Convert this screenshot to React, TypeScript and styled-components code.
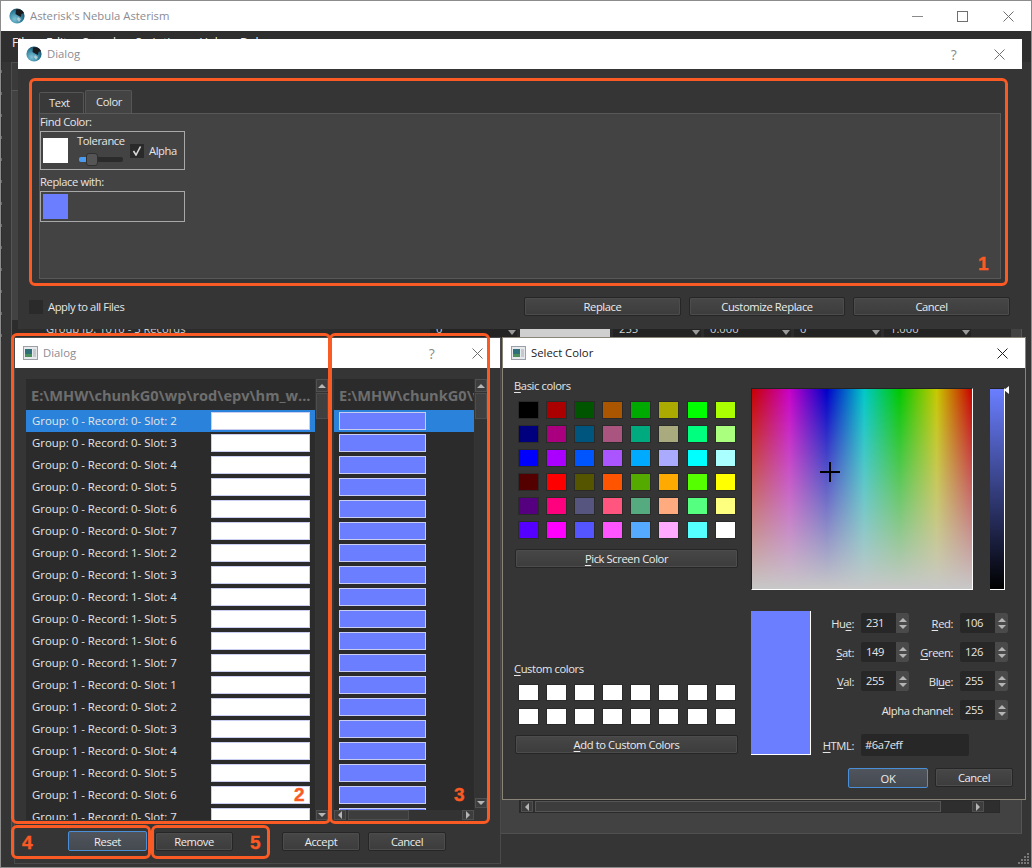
import React from "react";
import styled, { createGlobalStyle } from "styled-components";

const UI_FONT = `"Open Sans", "Noto Sans", sans-serif`;
const ORANGE = "#fa5a24";
const REPLACE = "#6a7eff";

const GlobalStyle = createGlobalStyle`
  html, body {
    margin: 0;
    padding: 0;
    background: #353535;
  }
  * {
    box-sizing: border-box;
  }
  body {
    font-family: ${UI_FONT};
    font-size: 11.2px;
    letter-spacing: -0.4px;
    color: #e6e6e6;
  }
`;

const Desktop = styled.div`
  position: relative;
  width: 1032px;
  height: 868px;
  overflow: hidden;
  background: #353535;
`;

/* windows on the desktop */
const MainWindow = styled.div`
  position: absolute;
  left: 0;
  top: 0;
  width: 1032px;
  height: 868px;
  display: flex;
  flex-direction: column;
  border: 1px solid #8c8c8c;
  background: #353535;
`;

const Window = styled.div<{ $x: number; $y: number; $w: number; $h: number; $border?: string }>`
  position: absolute;
  left: ${(p) => p.$x}px;
  top: ${(p) => p.$y}px;
  width: ${(p) => p.$w}px;
  height: ${(p) => p.$h}px;
  display: flex;
  flex-direction: column;
  background: #353535;
  border: ${(p) => (p.$border ? `1px solid ${p.$border}` : "none")};
`;

const TitleBar = styled.div<{ $pad?: number }>`
  flex: 0 0 30px;
  height: 30px;
  display: flex;
  align-items: center;
  padding-left: ${(p) => p.$pad ?? 8}px;
  background: #fff;
`;

const TitleText = styled.span<{ $active?: boolean }>`
  margin-left: 5px;
  padding-bottom: ${(p) => (p.$active ? 1 : 2)}px;
  font-size: 11.3px;
  letter-spacing: 0;
  color: ${(p) => (p.$active ? "#1a1a1a" : "#8b8b93")};
  flex: 1;
`;

const Caption = styled.div<{ $w: number }>`
  flex: 0 0 ${(p) => p.$w}px;
  width: ${(p) => p.$w}px;
  display: flex;
  align-items: center;
  justify-content: center;
  color: #8a8a8a;
  font-size: 14px;
`;

const GlobeIcon = () => (
  <svg width="16" height="16" viewBox="0 0 16 16">
    <defs>
      <radialGradient id="gl" cx="0.35" cy="0.7" r="0.8">
        <stop offset="0" stopColor="#7fc2d6" />
        <stop offset="0.6" stopColor="#2f7f9c" />
        <stop offset="1" stopColor="#123a4c" />
      </radialGradient>
    </defs>
    <circle cx="8" cy="8" r="7.6" fill="url(#gl)" />
    <path d="M7 1.5 C10 0.5 14 2 15 5 L12.5 6 L12 9 L9 7.5 L6.5 6 Z" fill="#1b1b1f" />
    <path d="M9 9 L12 11 L10 14 L8 11 Z" fill="#c9d6da" opacity="0.8" />
  </svg>
);

const QtWindowIcon = () => (
  <svg width="15" height="14" viewBox="0 0 15 14">
    <rect x="0.5" y="0.5" width="14" height="13" fill="#e7e9ec" stroke="#9aa0a6" />
    <rect x="2" y="3" width="7" height="8" fill="#2f6f78" />
    <rect x="2" y="8" width="7" height="3" fill="#4a8f5a" />
    <rect x="10" y="3" width="3" height="8" fill="#c5c9ce" />
  </svg>
);

const CloseIcon = ({ color = "#6f6f6f" }: { color?: string }) => (
  <svg width="11" height="11" viewBox="0 0 11 11">
    <path d="M0.5 0.5 L10.5 10.5 M10.5 0.5 L0.5 10.5" stroke={color} strokeWidth="1" fill="none" />
  </svg>
);

const MinIcon = () => (
  <svg width="11" height="11" viewBox="0 0 11 11">
    <path d="M0 5.5 H11" stroke="#8a8a8a" strokeWidth="1" />
  </svg>
);

const MaxIcon = () => (
  <svg width="11" height="11" viewBox="0 0 11 11">
    <rect x="0.5" y="0.5" width="10" height="10" fill="none" stroke="#6f6f6f" strokeWidth="1" />
  </svg>
);

const MenuBar = styled.div`
  flex: 0 0 31px;
  display: flex;
  gap: 15px;
  padding: 3px 0 0 11px;
  font-size: 12px;
  letter-spacing: 0;
  color: #eee;
  background: #2f2f2f;
`;

const MainContent = styled.div`
  flex: 1;
  display: flex;
  flex-direction: column;
  padding: 0 9px 33px 10px;
`;

const TabStub = styled.div`
  width: 60px;
  height: 28px;
  flex: none;
  border: 1px solid #4d4d4d;
  border-bottom: none;
  background: #3a3a3a;
`;

const MainPane = styled.div`
  flex: 1;
  display: flex;
  flex-direction: column;
  padding: 0 10px 9px 0;
  background: #424242;
  border: 1px solid #555;
  border-bottom-color: #4f4f4f;
`;

const TreeRow = styled.div`
  margin-top: 229px;
  height: 18px;
  display: flex;
  align-items: stretch;
  color: #cfcfcf;
  letter-spacing: 0;
  background: #2c2c2c;
`;

const TreeLabel = styled.div`
  width: 418px;
  padding-left: 34px;
  line-height: 18px;
  white-space: nowrap;
`;

const TreeCell = styled.div<{ $w: number; $gray?: boolean }>`
  position: relative;
  width: ${(p) => p.$w}px;
  margin-right: 3px;
  padding-left: 6px;
  line-height: 18px;
  background: ${(p) => (p.$gray ? "#cfcfcf" : "#232323")};
`;

const TreeDrop = styled.i`
  position: absolute;
  right: 1px;
  bottom: 3px;
  border-left: 4px solid transparent;
  border-right: 4px solid transparent;
  border-top: 5px solid #9a9a9a;
`;

const PaneFiller = styled.div`
  flex: 1;
`;

const PaneScroll = styled.div`
  height: 13px;
  margin: 0 11px 11px 507px;
  display: flex;
  align-items: center;
  background: #2e2e2e;
  border: 1px solid #2a2a2a;
  padding: 0 15px 0 1px;
`;

const PaneThumb = styled.div`
  flex: 1;
  height: 11px;
  margin: 0 31px 0 2px;
  background: #3d3d3d;
  border: 1px solid #555;
`;

const ScrollButton = styled.div<{ $w?: number; $h?: number }>`
  flex: none;
  width: ${(p) => p.$w ?? 12}px;
  height: ${(p) => p.$h ?? 12}px;
  display: flex;
  align-items: center;
  justify-content: center;
  background: #3d3d3d;
  border: 1px solid #505050;
`;

const Arrow = styled.i<{ $dir: "up" | "down" | "left" | "right"; $color?: string }>`
  width: 0;
  height: 0;
  display: block;
  ${(p) => {
    const c = p.$color ?? "#b5b5b5";
    if (p.$dir === "up") return `border-left:4px solid transparent;border-right:4px solid transparent;border-bottom:4px solid ${c};`;
    if (p.$dir === "down") return `border-left:4px solid transparent;border-right:4px solid transparent;border-top:4px solid ${c};`;
    if (p.$dir === "left") return `border-top:4px solid transparent;border-bottom:4px solid transparent;border-right:4px solid ${c};`;
    return `border-top:4px solid transparent;border-bottom:4px solid transparent;border-left:4px solid ${c};`;
  }}
`;

const Grip = styled.svg`
  position: absolute;
  right: 1px;
  bottom: 2px;
`;

const EdgeDots = styled.div`
  position: absolute;
  left: 0;
  top: 50px;
  width: 1px;
  height: 290px;
  background: repeating-linear-gradient(
    to bottom,
    #2f2f2f 0,
    #2f2f2f 19px,
    #8a5a4a 19px,
    #8a5a4a 22px
  );
`;

/* shared widgets */
const Button = styled.button<{ $w?: number; $focus?: boolean }>`
  flex: none;
  width: ${(p) => (p.$w ? `${p.$w}px` : "100%")};
  height: ${(p) => (p.$focus ? 20 : 19)}px;
  padding: 0;
  font-family: ${UI_FONT};
  font-size: 11.2px;
  letter-spacing: -0.4px;
  color: #ececec;
  border-radius: 2px;
  border: 1px solid ${(p) => (p.$focus ? "#4a90d9" : "#262626")};
  background: ${(p) =>
    p.$focus ? "linear-gradient(#50555d, #454950)" : "linear-gradient(#474747, #3c3c3c)"};
  box-shadow: ${(p) => (p.$focus ? "none" : "inset 0 0 0 1px #4c4c4c")};
  u {
    text-underline-offset: 2px;
  }
`;

/* replace dialog */
const ReplaceBody = styled.div`
  flex: 1;
  display: flex;
  flex-direction: column;
  padding: 21px 21px 0;
`;

const TabRow = styled.div`
  height: 23px;
  display: flex;
  align-items: flex-end;
  gap: 1px;
`;

const Tab = styled.div<{ $active?: boolean; $w: number }>`
  width: ${(p) => p.$w}px;
  height: ${(p) => (p.$active ? 23 : 21)}px;
  padding-left: ${(p) => (p.$active ? 10 : 9)}px;
  line-height: ${(p) => (p.$active ? 22 : 19)}px;
  border: 1px solid #555;
  border-bottom: none;
  border-radius: 2px 2px 0 0;
  background: ${(p) => (p.$active ? "#434343" : "#393939")};
`;

const TabPane = styled.div`
  height: 166px;
  display: flex;
  flex-direction: column;
  align-items: flex-start;
  background: #434343;
  border: 1px solid #585858;
`;

const FieldLabel = styled.div`
  height: 16px;
  line-height: 15px;
`;

const ColorFrame = styled.div<{ $h: number }>`
  width: 145px;
  height: ${(p) => p.$h}px;
  margin-top: 1px;
  margin-bottom: 4px;
  padding: 0 0 0 2px;
  display: flex;
  align-items: center;
  border: 1px solid #a8a8a8;
`;

const BigSwatch = styled.div<{ $color: string }>`
  flex: none;
  width: 25px;
  height: 25px;
  background: ${(p) => p.$color};
`;

const ToleranceBox = styled.div`
  width: 46px;
  margin: 0 7px 2px 9px;
  display: flex;
  flex-direction: column;
`;

const Slider = styled.div`
  position: relative;
  height: 13px;
  margin: 4px 0 0 2px;
  display: flex;
  align-items: center;
`;

const Groove = styled.div`
  width: 45px;
  height: 5px;
  border-radius: 2px;
  background: linear-gradient(to right, #4b9bf0 0, #4b9bf0 8px, #2b2b2b 8px);
`;

const Handle = styled.div`
  position: absolute;
  left: 7px;
  top: 0;
  width: 12px;
  height: 13px;
  border-radius: 3px;
  border: 1px solid #2f2f2f;
  background: #555;
`;

const CheckBox = styled.div`
  flex: none;
  width: 14px;
  height: 14px;
  display: flex;
  align-items: center;
  justify-content: center;
  background: #2a2a2a;
`;

const InlineLabel = styled.span`
  margin-left: 5px;
`;

const FooterRow = styled.div`
  margin: 18px -9px 0 -10px;
  display: flex;
  align-items: center;
  gap: 8px;
`;

const ApplyWrap = styled.div`
  flex: 1;
  display: flex;
  align-items: center;
`;

/* slot lists */
const ListsBody = styled.div`
  flex: 1;
  display: flex;
  flex-direction: column;
  padding: 11px 0 0 11px;
`;

const ListsRow = styled.div`
  height: 441px;
  display: flex;
`;

const ListPanel = styled.div<{ $w: number }>`
  width: ${(p) => p.$w}px;
  display: flex;
  flex-direction: column;
  overflow: hidden;
  background: #2b2b2b;
`;

const ListHeader = styled.div`
  flex: 0 0 31px;
  height: 31px;
  padding: 7px 0 0 5px;
  font-size: 14.6px;
  font-weight: 700;
  letter-spacing: 0;
  line-height: 18px;
  color: #6e6e6e;
  white-space: nowrap;
  overflow: hidden;
`;

const ListRows = styled.div`
  flex: 1;
  min-height: 0;
  overflow: hidden;
`;

const SlotRow = styled.div<{ $selected?: boolean; $pad: number }>`
  height: 22px;
  display: flex;
  align-items: center;
  padding-left: ${(p) => p.$pad}px;
  background: ${(p) => (p.$selected ? "#2a82da" : "transparent")};
`;

const SlotLabel = styled.span`
  flex: 0 0 179px;
  padding-bottom: 2px;
  font-size: 11.4px;
  letter-spacing: 0;
  white-space: nowrap;
`;

const SlotColor = styled.div<{ $color: string; $w: number }>`
  width: ${(p) => p.$w}px;
  height: 18px;
  background: ${(p) => p.$color};
  border: 1px solid #c9cdf0;
`;

const VScroll = styled.div<{ $h?: number }>`
  flex: none;
  width: 12px;
  margin-left: 1px;
  height: ${(p) => (p.$h ? `${p.$h}px` : "auto")};
  display: flex;
  flex-direction: column;
  gap: 1px;
  background: #333;
`;

const VThumb = styled.div`
  height: 26px;
  background: #3f3f3f;
  border: 1px solid #4d4d4d;
`;

const VFill = styled.div`
  flex: 1;
`;

const SplitHandle = styled.div`
  flex: none;
  width: 6px;
  display: flex;
  align-items: center;
  justify-content: center;
  color: #777;
  font-size: 8px;
  letter-spacing: 0;
`;

const HScroll = styled.div`
  flex: 0 0 10px;
  height: 10px;
  display: flex;
  background: #333;
`;

const HThumb = styled.div`
  width: 61px;
  margin-left: 2px;
  background: #3d3d3d;
  border: 1px solid #4d4d4d;
`;

const ListActions = styled.div`
  margin-top: 11px;
  display: flex;
  align-items: center;
  gap: 8px;
  padding-left: 42px;
`;

const ActionGap = styled.div`
  width: 33px;
`;

/* color picker */
const PickerBody = styled.div`
  flex: 1;
  display: flex;
  flex-direction: column;
  padding: 10px 12px 0 12px;
`;

const PickerRow = styled.div<{ $mt?: number }>`
  display: flex;
  margin-top: ${(p) => p.$mt ?? 0}px;
`;

const PickerLeft = styled.div<{ $end?: boolean }>`
  flex: 0 0 223px;
  width: 223px;
  display: flex;
  flex-direction: column;
  justify-content: ${(p) => (p.$end ? "flex-end" : "flex-start")};
  padding-bottom: ${(p) => (p.$end ? 2 : 0)}px;
`;

const SectionLabel = styled.div`
  height: 16px;
  line-height: 16px;
  margin-left: -1px;
  u {
    text-underline-offset: 2px;
  }
`;

const SwatchGrid = styled.div<{ $top: number; $rowGap: number; $bottom: number }>`
  display: grid;
  grid-template-columns: repeat(8, 21px);
  column-gap: 7.1px;
  row-gap: ${(p) => p.$rowGap}px;
  margin: ${(p) => p.$top}px 0 ${(p) => p.$bottom}px 3px;
`;

const Swatch = styled.div<{ $color: string; $h?: number }>`
  height: ${(p) => p.$h ?? 18}px;
  background: ${(p) => p.$color};
  border: 1px solid #2a2a2a;
`;

const HueField = styled.div`
  position: relative;
  flex: 0 0 222px;
  height: 202px;
  margin: 10px 0 0 13px;
  border-top: 1px solid #222;
  border-left: 1px solid #222;
  border-right: 1px solid #fff;
  border-bottom: 1px solid #fff;
  background: linear-gradient(to bottom, rgba(200, 200, 200, 0), #c8c8c8),
    linear-gradient(to right, #c80000, #c800c8 17%, #0000c8 34%, #00c8c8 51%, #00c800 67%, #c8c800 84%, #c80000);
`;

const Crosshair = styled.div`
  position: absolute;
  left: 68px;
  top: 73px;
  width: 20px;
  height: 20px;
  &::before,
  &::after {
    content: "";
    position: absolute;
    background: #000;
  }
  &::before {
    left: 9px;
    top: 0;
    width: 2px;
    height: 20px;
  }
  &::after {
    left: 0;
    top: 9px;
    width: 20px;
    height: 2px;
  }
`;

const ValueBar = styled.div`
  position: relative;
  flex: 0 0 15px;
  height: 202px;
  margin: 10px 0 0 17px;
  border-right: 1px solid #fff;
  border-bottom: 1px solid #fff;
  border-top: 1px solid #222;
  background: linear-gradient(to bottom, ${REPLACE}, #000);
`;

const ValueMarker = styled.i`
  position: absolute;
  left: 14px;
  top: -3px;
  border-top: 4px solid transparent;
  border-bottom: 4px solid transparent;
  border-right: 5px solid #fff;
`;

const Preview = styled.div`
  flex: 0 0 60px;
  height: 144px;
  margin-left: 13px;
  background: ${REPLACE};
  border-right: 1px solid #fff;
  border-bottom: 1px solid #fff;
`;

const Fields = styled.div`
  display: flex;
  flex-direction: column;
  padding-top: 2px;
`;

const FieldRow = styled.div<{ $mb?: number }>`
  display: flex;
  align-items: center;
  margin-bottom: ${(p) => p.$mb ?? 9}px;
`;

const SpinLabel = styled.label<{ $w: number }>`
  width: ${(p) => p.$w}px;
  margin-right: 7px;
  text-align: right;
  white-space: nowrap;
  u {
    text-underline-offset: 2px;
  }
`;

const Spin = styled.div`
  width: 48px;
  height: 20px;
  display: flex;
  border-radius: 2px;
  overflow: hidden;
  background: #272727;
`;

const SpinValue = styled.span`
  flex: 1;
  padding-left: 5px;
  line-height: 20px;
`;

const SpinButtons = styled.div`
  width: 13px;
  display: flex;
  flex-direction: column;
  align-items: center;
  justify-content: center;
  gap: 3px;
  background: #4a4a4a;
`;

const HtmlInput = styled.div`
  width: 108px;
  height: 22px;
  padding-left: 4px;
  line-height: 22px;
  border-radius: 2px;
  background: #272727;
`;

const PickerActions = styled.div`
  margin-top: 12px;
  display: flex;
  justify-content: flex-end;
  gap: 7px;
`;

/* orange call-outs drawn on top of the screenshot */
const Callout = styled.div<{ $x: number; $y: number; $w: number; $h: number }>`
  position: absolute;
  left: ${(p) => p.$x}px;
  top: ${(p) => p.$y}px;
  width: ${(p) => p.$w}px;
  height: ${(p) => p.$h}px;
  border: 3px solid ${ORANGE};
  border-radius: 6px;
  pointer-events: none;
`;

const CalloutNumber = styled.span<{ $x: number; $y: number }>`
  position: absolute;
  left: ${(p) => p.$x}px;
  top: ${(p) => p.$y}px;
  font-family: "Liberation Sans", sans-serif;
  font-size: 19px;
  font-weight: 700;
  line-height: 19px;
  letter-spacing: 0;
  color: ${ORANGE};
  -webkit-text-stroke: 0.4px ${ORANGE};
`;

const slots: string[] = [
  ...[2, 3, 4, 5, 6, 7].map((s) => `Group: 0 - Record: 0- Slot: ${s}`),
  ...[2, 3, 4, 5, 6, 7].map((s) => `Group: 0 - Record: 1- Slot: ${s}`),
  ...[1, 2, 3, 4, 5, 6, 7].map((s) => `Group: 1 - Record: 0- Slot: ${s}`),
];

const basicColors = [
  "#000000", "#aa0000", "#005500", "#aa5500", "#00aa00", "#aaaa00", "#00ff00", "#aaff00",
  "#00007f", "#aa007f", "#00557f", "#aa557f", "#00aa7f", "#aaaa7f", "#00ff7f", "#aaff7f",
  "#0000ff", "#aa00ff", "#0055ff", "#aa55ff", "#00aaff", "#aaaaff", "#00ffff", "#aaffff",
  "#550000", "#ff0000", "#555500", "#ff5500", "#55aa00", "#ffaa00", "#55ff00", "#ffff00",
  "#55007f", "#ff007f", "#55557f", "#ff557f", "#55aa7f", "#ffaa7f", "#55ff7f", "#ffff7f",
  "#5500ff", "#ff00ff", "#5555ff", "#ff55ff", "#55aaff", "#ffaaff", "#55ffff", "#ffffff",
];

const SpinBox = ({ value }: { value: number }) => (
  <Spin>
    <SpinValue>{value}</SpinValue>
    <SpinButtons>
      <Arrow $dir="up" />
      <Arrow $dir="down" />
    </SpinButtons>
  </Spin>
);

const ScrollBarV = ({ h }: { h?: number }) => (
  <VScroll $h={h}>
    <ScrollButton $h={13}>
      <Arrow $dir="up" />
    </ScrollButton>
    <VThumb />
    <VFill />
    <ScrollButton $h={10}>
      <Arrow $dir="down" />
    </ScrollButton>
  </VScroll>
);

const App = () => {
  return (
    <Desktop>
      <GlobalStyle />
      <MainWindow>
        <TitleBar>
          <GlobeIcon />
          <TitleText>Asterisk's Nebula Asterism</TitleText>
          <Caption $w={45}>
            <MinIcon />
          </Caption>
          <Caption $w={45}>
            <MaxIcon />
          </Caption>
          <Caption $w={46}>
            <CloseIcon />
          </Caption>
        </TitleBar>
        <MenuBar>
          <span>File</span>
          <span>Edit</span>
          <span>Search</span>
          <span>Scripting</span>
          <span>Help</span>
          <span>Debug</span>
        </MenuBar>
        <MainContent>
          <TabStub />
          <MainPane>
            <TreeRow>
              <TreeLabel>Group ID: 1010 - 3 Records</TreeLabel>
              <TreeCell $w={87}>
                0
                <TreeDrop />
              </TreeCell>
              <TreeCell $w={90} $gray />
              <TreeCell $w={88}>
                255
                <TreeDrop />
              </TreeCell>
              <TreeCell $w={87}>
                0.000
                <TreeDrop />
              </TreeCell>
              <TreeCell $w={87}>
                0
                <TreeDrop />
              </TreeCell>
              <TreeCell $w={87}>
                1.000
                <TreeDrop />
              </TreeCell>
            </TreeRow>
            <PaneFiller />
            <PaneScroll>
              <ScrollButton $w={12} $h={11}>
                <Arrow $dir="left" />
              </ScrollButton>
              <PaneThumb />
              <ScrollButton $w={12} $h={11}>
                <Arrow $dir="right" />
              </ScrollButton>
            </PaneScroll>
          </MainPane>
        </MainContent>
        <Grip width="12" height="12" viewBox="0 0 12 12">
          <g fill="#777">
            <rect x="9" y="0" width="2" height="2" />
            <rect x="6" y="3" width="2" height="2" />
            <rect x="9" y="3" width="2" height="2" />
            <rect x="3" y="6" width="2" height="2" />
            <rect x="6" y="6" width="2" height="2" />
            <rect x="9" y="6" width="2" height="2" />
            <rect x="0" y="9" width="2" height="2" />
            <rect x="3" y="9" width="2" height="2" />
            <rect x="6" y="9" width="2" height="2" />
            <rect x="9" y="9" width="2" height="2" />
          </g>
        </Grip>
        <EdgeDots />
      </MainWindow>

      <Window $x={18} $y={39} $w={1004} $h={290}>
        <TitleBar>
          <GlobeIcon />
          <TitleText>Dialog</TitleText>
          <Caption $w={45}>?</Caption>
          <Caption $w={46}>
            <CloseIcon />
          </Caption>
        </TitleBar>
        <ReplaceBody>
          <TabRow>
            <Tab $w={45}>Text</Tab>
            <Tab $w={47} $active>
              Color
            </Tab>
          </TabRow>
          <TabPane>
            <FieldLabel>Find Color:</FieldLabel>
            <ColorFrame $h={39}>
              <BigSwatch $color="#fff" />
              <ToleranceBox>
                <FieldLabel>Tolerance</FieldLabel>
                <Slider>
                  <Groove />
                  <Handle />
                </Slider>
              </ToleranceBox>
              <CheckBox>
                <svg width="10" height="10" viewBox="0 0 10 10">
                  <path d="M1.5 5 L4 9 L8.5 0.5" fill="none" stroke="#d8d8d8" strokeWidth="1.6" />
                </svg>
              </CheckBox>
              <InlineLabel>Alpha</InlineLabel>
            </ColorFrame>
            <FieldLabel>Replace with:</FieldLabel>
            <ColorFrame $h={31}>
              <BigSwatch $color={REPLACE} />
            </ColorFrame>
          </TabPane>
          <FooterRow>
            <ApplyWrap>
              <CheckBox />
              <InlineLabel>Apply to all Files</InlineLabel>
            </ApplyWrap>
            <Button $w={157}>Replace</Button>
            <Button $w={156}>Customize Replace</Button>
            <Button $w={157}>Cancel</Button>
          </FooterRow>
        </ReplaceBody>
      </Window>

      <Window $x={14} $y={337} $w={487} $h={527} $border="#4a4a4a">
        <TitleBar>
          <QtWindowIcon />
          <TitleText>Dialog</TitleText>
          <Caption $w={45}>?</Caption>
          <Caption $w={46}>
            <CloseIcon />
          </Caption>
        </TitleBar>
        <ListsBody>
          <ListsRow>
            <ListPanel $w={289}>
              <ListHeader>E:\MHW\chunkG0\wp\rod\epv\hm_w...</ListHeader>
              <ListRows>
                {slots.map((name, i) => (
                  <SlotRow key={name} $selected={i === 0} $pad={6}>
                    <SlotLabel>{name}</SlotLabel>
                    <SlotColor $color="#fff" $w={99} />
                  </SlotRow>
                ))}
              </ListRows>
            </ListPanel>
            <ScrollBarV />
            <SplitHandle>⋮</SplitHandle>
            <ListPanel $w={140}>
              <ListHeader>E:\MHW\chunkG0\wp\rod\epv\hm_w...</ListHeader>
              <ListRows>
                {slots.map((name, i) => (
                  <SlotRow key={name} $selected={i === 0} $pad={5}>
                    <SlotColor $color={REPLACE} $w={87} />
                  </SlotRow>
                ))}
              </ListRows>
              <HScroll>
                <ScrollButton $w={12} $h={10}>
                  <Arrow $dir="left" />
                </ScrollButton>
                <HThumb />
                <VFill />
                <ScrollButton $w={12} $h={10}>
                  <Arrow $dir="right" />
                </ScrollButton>
              </HScroll>
            </ListPanel>
            <ScrollBarV h={429} />
          </ListsRow>
          <ListActions>
            <Button $w={79} $focus>
              Reset
            </Button>
            <Button $w={78}>Remove</Button>
            <ActionGap />
            <Button $w={78}>Accept</Button>
            <Button $w={78}>Cancel</Button>
          </ListActions>
        </ListsBody>
      </Window>

      <Window $x={502} $y={337} $w={524} $h={463} $border="#8a8478">
        <TitleBar>
          <QtWindowIcon />
          <TitleText $active>Select Color</TitleText>
          <Caption $w={46}>
            <CloseIcon color="#222" />
          </Caption>
        </TitleBar>
        <PickerBody>
          <PickerRow>
            <PickerLeft>
              <SectionLabel>
                <u>B</u>asic colors
              </SectionLabel>
              <SwatchGrid $top={7} $rowGap={6} $bottom={10}>
                {basicColors.map((c, i) => (
                  <Swatch key={i} $color={c} />
                ))}
              </SwatchGrid>
              <Button>
                <u>P</u>ick Screen Color
              </Button>
            </PickerLeft>
            <HueField>
              <Crosshair />
            </HueField>
            <ValueBar>
              <ValueMarker />
            </ValueBar>
          </PickerRow>
          <PickerRow $mt={21}>
            <PickerLeft $end>
              <SectionLabel>
                <u>C</u>ustom colors
              </SectionLabel>
              <SwatchGrid $top={7} $rowGap={7} $bottom={10}>
                {Array.from({ length: 16 }).map((_, i) => (
                  <Swatch key={i} $color="#fff" $h={17} />
                ))}
              </SwatchGrid>
              <Button>
                <u>A</u>dd to Custom Colors
              </Button>
            </PickerLeft>
            <Preview />
            <Fields>
              <FieldRow>
                <SpinLabel $w={43}>
                  Hu<u>e</u>:
                </SpinLabel>
                <SpinBox value={231} />
                <SpinLabel $w={44}>
                  <u>R</u>ed:
                </SpinLabel>
                <SpinBox value={106} />
              </FieldRow>
              <FieldRow>
                <SpinLabel $w={43}>
                  <u>S</u>at:
                </SpinLabel>
                <SpinBox value={149} />
                <SpinLabel $w={44}>
                  <u>G</u>reen:
                </SpinLabel>
                <SpinBox value={126} />
              </FieldRow>
              <FieldRow>
                <SpinLabel $w={43}>
                  <u>V</u>al:
                </SpinLabel>
                <SpinBox value={255} />
                <SpinLabel $w={44}>
                  Bl<u>u</u>e:
                </SpinLabel>
                <SpinBox value={255} />
              </FieldRow>
              <FieldRow $mb={14}>
                <SpinLabel $w={142}>Alpha channel:</SpinLabel>
                <SpinBox value={255} />
              </FieldRow>
              <FieldRow $mb={0}>
                <SpinLabel $w={43}>
                  <u>H</u>TML:
                </SpinLabel>
                <HtmlInput>#6a7eff</HtmlInput>
              </FieldRow>
            </Fields>
          </PickerRow>
          <PickerActions>
            <Button $w={80} $focus>
              OK
            </Button>
            <Button $w={78}>Cancel</Button>
          </PickerActions>
        </PickerBody>
      </Window>

      <Callout $x={29} $y={78} $w={979} $h={208}>
        <CalloutNumber $x={946} $y={173}>
          1
        </CalloutNumber>
      </Callout>
      <Callout $x={11} $y={333} $w={320} $h={491}>
        <CalloutNumber $x={280} $y={449}>
          2
        </CalloutNumber>
      </Callout>
      <Callout $x={329} $y={333} $w={161} $h={491}>
        <CalloutNumber $x={122} $y={449}>
          3
        </CalloutNumber>
      </Callout>
      <Callout $x={11} $y={825} $w={140} $h={34}>
        <CalloutNumber $x={8} $y={5}>
          4
        </CalloutNumber>
      </Callout>
      <Callout $x={151} $y={825} $w={119} $h={34}>
        <CalloutNumber $x={96} $y={5}>
          5
        </CalloutNumber>
      </Callout>
    </Desktop>
  );
};

export default App;
